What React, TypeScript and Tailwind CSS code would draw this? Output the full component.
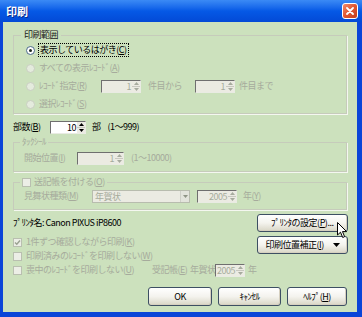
import React from "react";

const DIS = "text-[#a6ab9c]";
const GREEN = "bg-[#cce1bd]";

function U({ c }: { c: string }) {
  return <span className="underline underline-offset-[1px]">{c}</span>;
}

function Radio({ checked, disabled }: { checked?: boolean; disabled?: boolean }) {
  return (
    <span
      className={`flex h-[9px] w-[9px] shrink-0 items-center justify-center rounded-full border ${
        disabled ? "border-[#c9cfc1] bg-[#e4ebdd]" : "border-[#4b6a8a] bg-white"
      }`}
    >
      {checked && <span className="h-[3px] w-[3px] rounded-full bg-[#1f2a1f]" />}
    </span>
  );
}

function Check({ checked, disabled }: { checked?: boolean; disabled?: boolean }) {
  return (
    <span
      className={`flex h-[9px] w-[9px] shrink-0 items-center justify-center border ${
        disabled ? "border-[#b9bfb0] bg-[#eceee6]" : "border-[#1c5180] bg-white"
      }`}
    >
      {checked && (
        <svg width="7" height="7" viewBox="0 0 7 7">
          <path d="M1 3.5 L2.8 5.3 L6 1.5" fill="none" stroke="#9aa191" strokeWidth="1.4" />
        </svg>
      )}
    </span>
  );
}

function Tri({ up, color = "#000" }: { up?: boolean; color?: string }) {
  return (
    <svg width="5" height="3" viewBox="0 0 5 3">
      <path d={up ? "M0 3 L2.5 0 L5 3 Z" : "M0 0 L5 0 L2.5 3 Z"} fill={color} />
    </svg>
  );
}

function Spin({ value, disabled, w = "w-[40px]" }: { value: string; disabled?: boolean; w?: string }) {
  const arrow = disabled ? "#a7ab9e" : "#000";
  return (
    <div
      className={`flex h-[13px] ${w} shrink-0 border border-t-[#6f6f6f] border-l-[#6f6f6f] border-r-[#e9ebe3] border-b-[#e9ebe3] ${
        disabled ? "bg-[#ebebe2]" : "bg-white"
      }`}
    >
      <div className={`flex-1 pr-[1px] text-right leading-[11px] ${disabled ? DIS : "text-black"}`}>{value}</div>
      <div className="flex w-[8px] shrink-0 flex-col bg-[#ecebe3]">
        <div className="flex flex-1 items-center justify-center border-b border-[#c8c8c0]">
          <Tri up color={arrow} />
        </div>
        <div className="flex flex-1 items-center justify-center">
          <Tri color={arrow} />
        </div>
      </div>
    </div>
  );
}

function Btn({ children, className = "" }: { children: React.ReactNode; className?: string }) {
  return (
    <div
      className={`flex items-center rounded-[3px] border border-[#3d4f63] bg-gradient-to-b from-[#ffffff] via-[#f4f3ee] to-[#d9d6c6] text-black shadow-[inset_-1px_-1px_0_#d6d0c0] ${className}`}
    >
      {children}
    </div>
  );
}

export default function App() {
  return (
    <div className="h-[317px] w-[362px] overflow-hidden whitespace-nowrap bg-[#0a45d8] font-['Noto_Sans_CJK_JP',sans-serif] text-[9px] tracking-[-0.5px] text-black">
      {/* title bar */}
      <div className="relative flex h-[22px] items-center bg-gradient-to-b from-[#3b8af5] via-[#0559e6] to-[#0349d6] pl-[6px] pr-[4px]">
        <span className="text-[11px] font-bold leading-none tracking-normal text-white [text-shadow:1px_1px_0_#0a2a8c]">印刷</span>
        <div className="ml-auto flex h-[16px] w-[16px] items-center justify-center rounded-[3px] border border-white bg-gradient-to-br from-[#f08a6a] via-[#e05530] to-[#c4401c]">
          <svg width="8" height="8" viewBox="0 0 8 8">
            <path d="M1 1 L7 7 M7 1 L1 7" stroke="#fff" strokeWidth="1.8" strokeLinecap="round" />
          </svg>
        </div>
      </div>

      {/* body */}
      <div className={`relative ml-[3px] mr-[5px] h-[290px] ${GREEN} px-[10px] pt-[7px]`}>
        {/* group 1 */}
        <fieldset className="border border-[#c6cbbb] px-[12px] pb-0 shadow-[1px_1px_0_#f4f7f0]">
          <legend className={`ml-[-5px] px-[3px] leading-[12px] text-[#202020] ${GREEN}`}>印刷範囲</legend>
          <div className="flex h-[18px] items-center">
            <Radio checked />
            <span className="ml-[3px] border border-dotted border-black px-[1px] leading-[12px]">
              表示しているはがき(<U c="C" />)
            </span>
          </div>
          <div className={`flex h-[18px] items-center ${DIS}`}>
            <Radio disabled />
            <span className="ml-[4px] leading-[12px]">
              すべての表示ﾚｺｰﾄﾞ(<U c="A" />)
            </span>
          </div>
          <div className={`flex h-[18px] items-center ${DIS}`}>
            <Radio disabled />
            <span className="ml-[4px] w-[62px] leading-[12px]">
              ﾚｺｰﾄﾞ指定(<U c="R" />)
            </span>
            <Spin value="1" disabled />
            <span className="ml-[7px] w-[47px] leading-[12px]">件目から</span>
            <Spin value="1" disabled />
            <span className="ml-[4px] leading-[12px]">件目まで</span>
          </div>
          <div className={`flex h-[18px] items-center ${DIS}`}>
            <Radio disabled />
            <span className="ml-[4px] leading-[12px]">
              選択ﾚｺｰﾄﾞ(<U c="S" />)
            </span>
          </div>
        </fieldset>

        {/* copies */}
        <div className="mt-[6px] flex h-[14px] items-center">
          <span className="w-[37px] leading-[12px]">
            部数(<U c="B" />)
          </span>
          <Spin value="10" w="w-[36px]" />
          <span className="ml-[6px] leading-[12px]">部</span>
          <span className="ml-[7px] leading-[12px]">(1～999)</span>
        </div>

        {/* group 2 */}
        <fieldset className="mt-[2px] border border-[#c6cbbb] px-[10px] pb-[6px] pt-[3px] shadow-[1px_1px_0_#f4f7f0]">
          <legend className={`ml-[-4px] px-[2px] leading-[12px] ${DIS} ${GREEN}`}>ﾀｯｸｼｰﾙ</legend>
          <div className={`flex h-[14px] items-center ${DIS}`}>
            <span className="w-[53px] leading-[12px]">
              開始位置(<U c="I" />)
            </span>
            <Spin value="1" disabled w="w-[47px]" />
            <span className="ml-[7px] leading-[12px]">(1～10000)</span>
          </div>
        </fieldset>

        {/* group 3 */}
        <fieldset className="mt-[4px] border border-[#c6cbbb] px-[10px] pb-[6px] pt-[1px] shadow-[1px_1px_0_#f4f7f0]">
          <legend className={`ml-[-4px] flex items-center px-[2px] leading-[12px] ${DIS} ${GREEN}`}>
            <Check disabled />
            <span className="ml-[3px]">
              送記帳を付ける(<U c="O" />)
            </span>
          </legend>
          <div className={`flex h-[14px] items-center ${DIS}`}>
            <span className="w-[68px] leading-[12px]">
              見舞状種類(<U c="M" />)
            </span>
            <div className="flex h-[13px] w-[98px] border border-[#b8bcae] bg-[#ebebe2]">
              <span className="flex-1 pl-[2px] leading-[11px]">年賀状</span>
              <div className="flex w-[9px] items-center justify-center border-l border-[#cfd0c8] bg-[#e3e4dc]">
                <Tri color="#8f9486" />
              </div>
            </div>
            <span className="ml-[7px]">
              <Spin value="2005" disabled />
            </span>
            <span className="ml-[6px] leading-[12px]">
              年(<U c="Y" />)
            </span>
          </div>
        </fieldset>

        {/* printer + options */}
        <div className="mt-[4px] flex">
          <div className="flex-1">
            <div className="flex h-[18px] items-center leading-[12px]">ﾌﾟﾘﾝﾀ名: Canon PIXUS iP8600</div>
            <div className={`mt-[3px] flex h-[14px] items-center ${DIS}`}>
              <Check checked disabled />
              <span className="ml-[4px] leading-[12px]">
                1件ずつ確認しながら印刷(<U c="K" />)
              </span>
            </div>
            <div className={`flex h-[14px] items-center ${DIS}`}>
              <Check disabled />
              <span className="ml-[4px] leading-[12px]">
                印刷済みのﾚｺｰﾄﾞを印刷しない(<U c="W" />)
              </span>
            </div>
            <div className={`flex h-[14px] items-center ${DIS}`}>
              <Check disabled />
              <span className="ml-[4px] w-[126px] leading-[12px]">
                喪中のﾚｺｰﾄﾞを印刷しない(<U c="U" />)
              </span>
              <span className="w-[38px] leading-[12px]">
                受記帳(<U c="E" />)
              </span>
              <span className="w-[25px] leading-[12px]">年賀状</span>
              <Spin value="2005" disabled w="w-[30px]" />
              <span className="ml-[3px] leading-[12px]">年</span>
            </div>
          </div>
          <div className="mr-[-1px] flex w-[94px] flex-col">
            <Btn className="h-[18px] justify-center">
              <span className="leading-[12px]">
                ﾌﾟﾘﾝﾀの設定(<U c="P" />)...
              </span>
            </Btn>
            <Btn className="mt-[4px] h-[18px] pl-[8px] pr-[7px]">
              <span className="leading-[12px]">
                印刷位置補正(<U c="I" />)
              </span>
              <span className="ml-auto">
                <svg width="7" height="4" viewBox="0 0 7 4">
                  <path d="M0 0 L7 0 L3.5 4 Z" fill="#000" />
                </svg>
              </span>
            </Btn>
          </div>
        </div>

        {/* bottom buttons */}
        <div className="mt-[10px] flex justify-end gap-[6px]">
          <Btn className="h-[19px] w-[64px] justify-center">
            <span className="leading-[12px]">OK</span>
          </Btn>
          <Btn className="h-[19px] w-[63px] justify-center">
            <span className="leading-[12px]">ｷｬﾝｾﾙ</span>
          </Btn>
          <Btn className="h-[19px] w-[60px] justify-center">
            <span className="leading-[12px]">
              ﾍﾙﾌﾟ(<U c="H" />)
            </span>
          </Btn>
        </div>

        {/* mouse cursor */}
        <svg className="absolute left-[334px] top-[200px]" width="11" height="17" viewBox="0 0 11 17">
          <path d="M0.5 0.5 L0.5 13 L3.5 10.2 L5.7 15.5 L7.6 14.7 L5.5 9.6 L9.6 9.6 Z" fill="#fff" stroke="#000" strokeWidth="1" strokeLinejoin="round" />
        </svg>
      </div>
    </div>
  );
}
